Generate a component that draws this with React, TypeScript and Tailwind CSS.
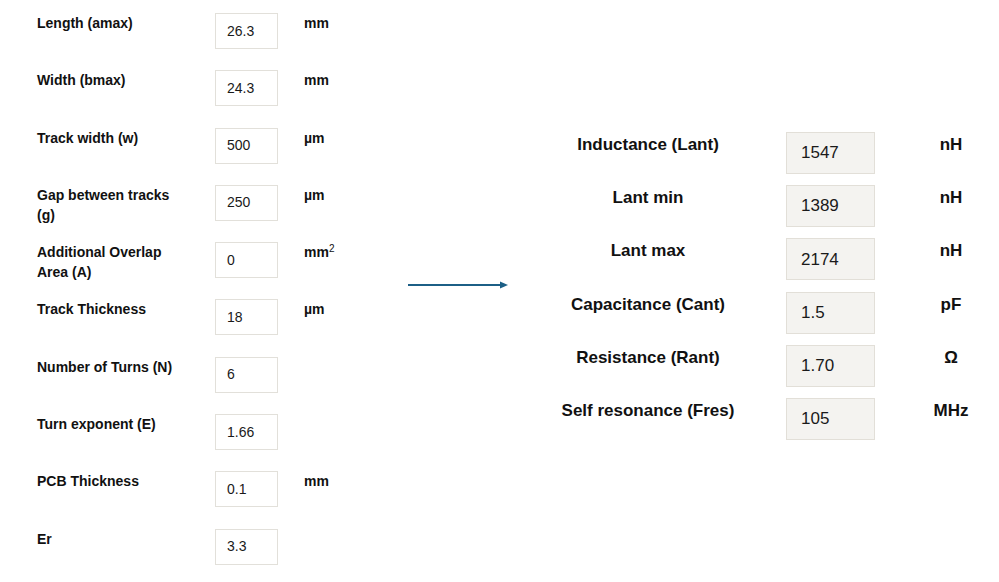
const inputs = [
  { label: "Length (amax)", value: "26.3", unit: "mm" },
  { label: "Width (bmax)", value: "24.3", unit: "mm" },
  { label: "Track width (w)", value: "500", unit: "µm" },
  { label: "Gap between tracks (g)", value: "250", unit: "µm" },
  { label: "Additional Overlap Area (A)", value: "0", unit: "mm2" },
  { label: "Track Thickness", value: "18", unit: "µm" },
  { label: "Number of Turns (N)", value: "6", unit: "" },
  { label: "Turn exponent (E)", value: "1.66", unit: "" },
  { label: "PCB Thickness", value: "0.1", unit: "mm" },
  { label: "Er", value: "3.3", unit: "" },
];

const outputs = [
  { label: "Inductance (Lant)", value: "1547", unit: "nH" },
  { label: "Lant min", value: "1389", unit: "nH" },
  { label: "Lant max", value: "2174", unit: "nH" },
  { label: "Capacitance (Cant)", value: "1.5", unit: "pF" },
  { label: "Resistance (Rant)", value: "1.70", unit: "Ω" },
  { label: "Self resonance (Fres)", value: "105", unit: "MHz" },
];

export default function App() {
  return (
    <div className="flex w-[999px] h-[582px] overflow-hidden bg-white text-[#111] font-['Liberation_Sans',Arial,sans-serif]">
      {/* parameters */}
      <div className="w-[408px] shrink-0 pl-[37px] pt-[13px]">
        {inputs.map((row) => (
          <div key={row.label} className="flex items-start h-[57.3px]">
            <div className="w-[142px] text-[14px] leading-[20px] font-bold">{row.label}</div>
            <div className="ml-[36px] w-[63px] h-[36px] flex items-center pl-[11px] border border-[#e2e0da] bg-white text-[14px] text-[#1a1a1a]">
              {row.value}
            </div>
            <div className="ml-[26px] text-[14px] leading-[20px] font-bold">
              {row.unit === "mm2" ? (
                <>
                  mm<sup className="text-[10px] font-normal">2</sup>
                </>
              ) : (
                row.unit
              )}
            </div>
          </div>
        ))}
      </div>

      {/* arrow */}
      <div className="w-[100px] shrink-0 pt-[280px]">
        <svg width="100" height="10" viewBox="0 0 100 10">
          <line x1="0" y1="5" x2="93" y2="5" stroke="#1c5f86" strokeWidth="2" />
          <polygon points="92,1.5 100,5 92,8.5" fill="#1c5f86" />
        </svg>
      </div>

      {/* results */}
      <div className="ml-[40px] pt-[133px]">
        {outputs.map((row) => (
          <div key={row.label} className="flex items-start h-[53.2px]">
            <div className="w-[200px] text-center text-[17px] leading-[24px] font-bold">{row.label}</div>
            <div className="ml-[38px] -mt-[1px] w-[89px] h-[42px] flex items-center pl-[14px] border border-[#e2dfd8] bg-[#f4f3f0] text-[17px] text-[#1a1a1a]">
              {row.value}
            </div>
            <div className="ml-[36px] w-[80px] text-center text-[17px] leading-[24px] font-bold">{row.unit}</div>
          </div>
        ))}
      </div>
    </div>
  );
}
